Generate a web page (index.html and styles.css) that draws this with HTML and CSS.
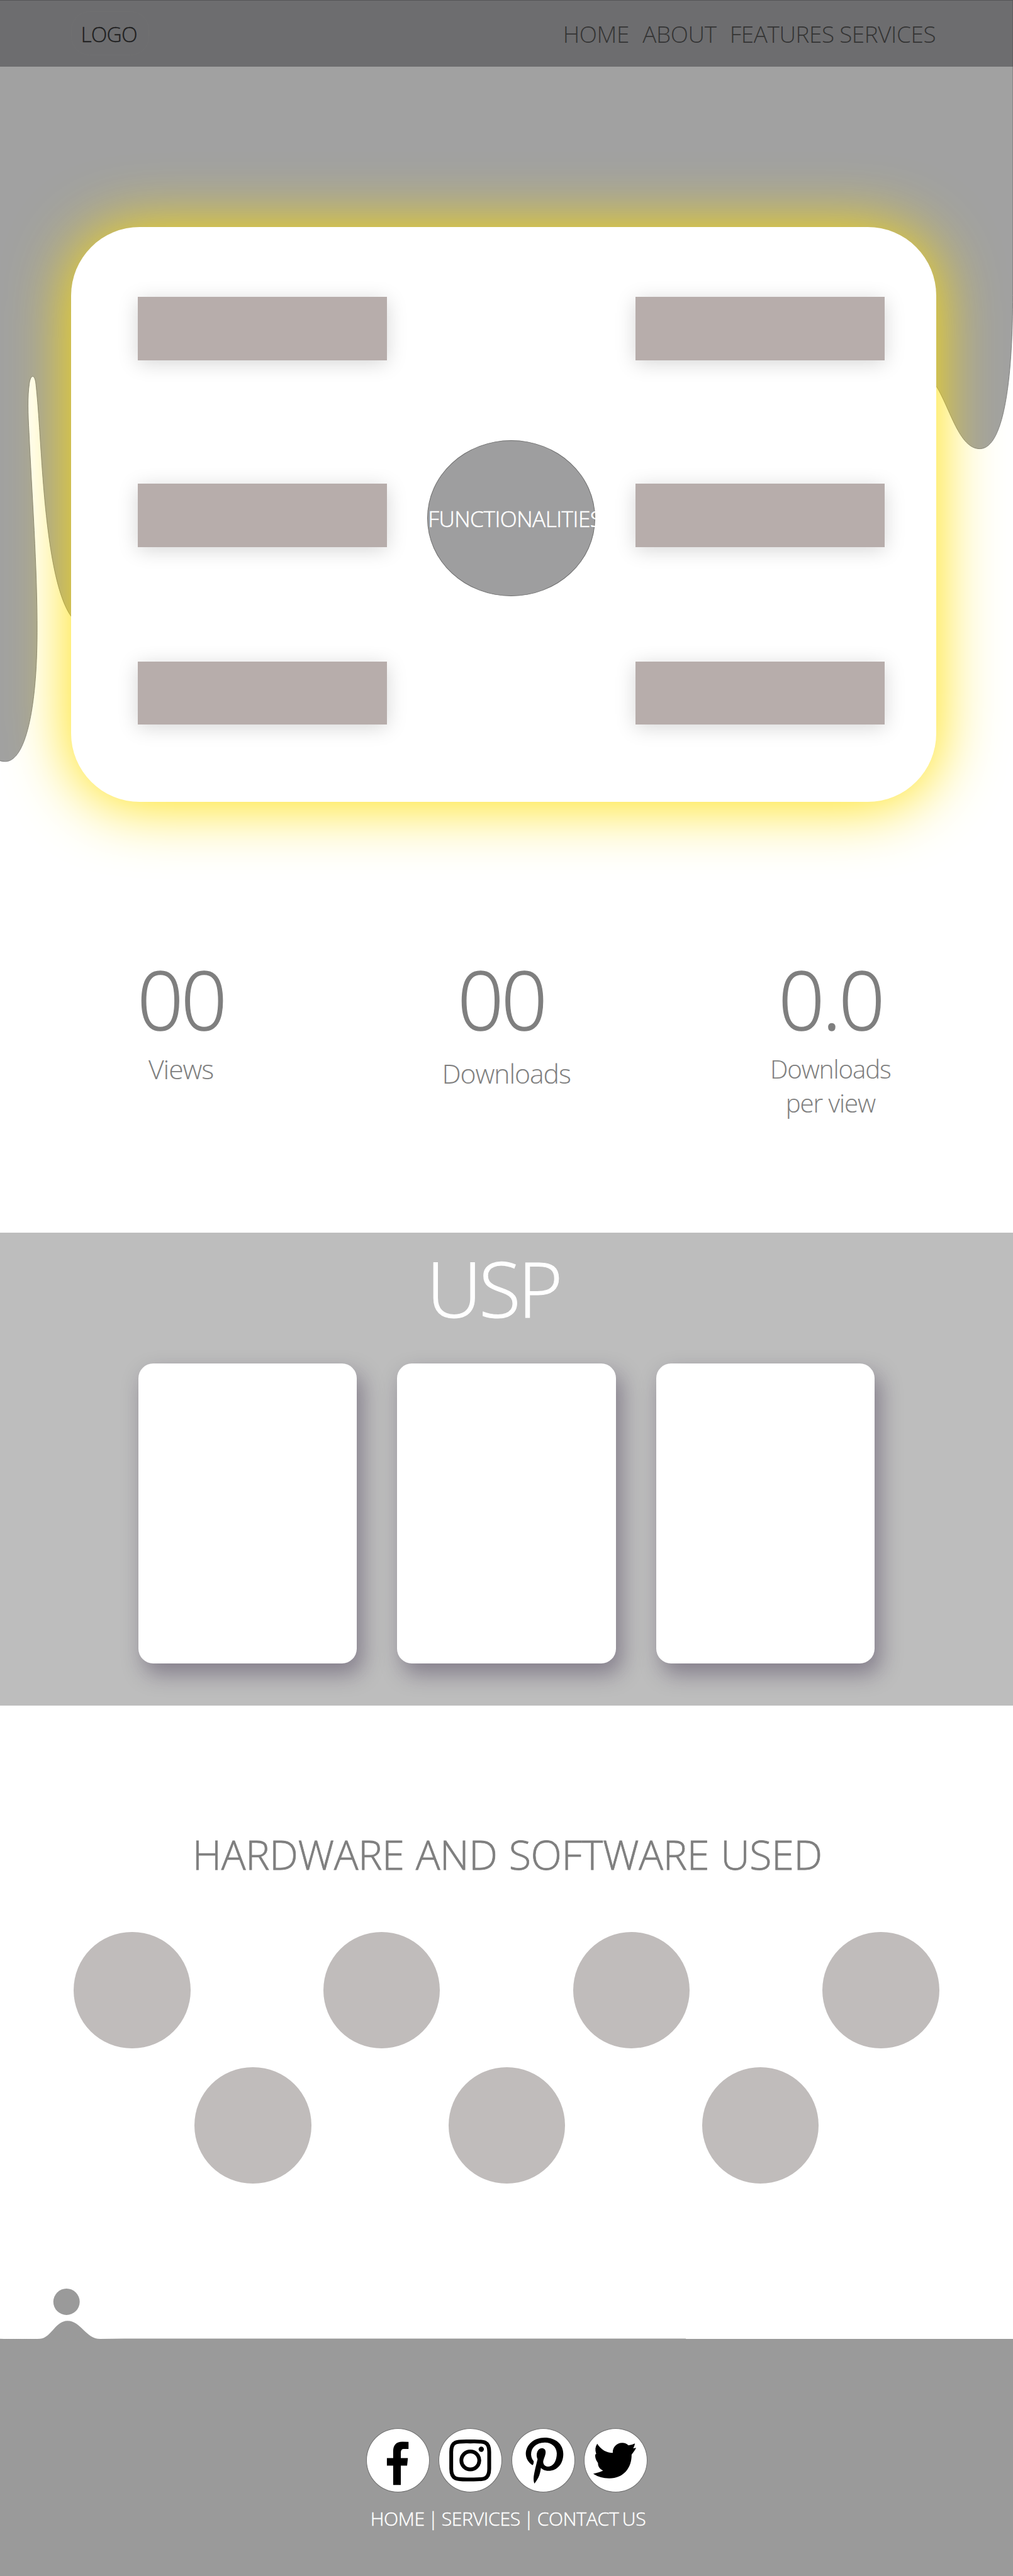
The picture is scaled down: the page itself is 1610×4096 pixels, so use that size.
FILE: index.html
```html
<!DOCTYPE html>
<html lang="en">
<head>
<meta charset="utf-8">
<title>Landing page</title>
<link rel="stylesheet" href="styles.css">
</head>
<body>
<svg class="drip" viewBox="0 0 1920 1450" aria-hidden="true">
  <path d="M-2 -2H1919.5V560C1919.5 700 1906 851 1857 851C1818 851 1801 775 1775 733L1400 600L300 1200L135 1169C100 1120 86 985 78 860C74 800 72 765 68 728C66 709 58 709 55.500 728C52 752 53 785 55 820C60 930 71 1080 70.400 1199C70 1345 48 1444 10 1444Q4 1444 -2 1442Z"/>
</svg>
<header class="header">
  <a class="logo">LOGO</a>
  <nav class="nav"><a>HOME</a><a>ABOUT</a><a>FEATURES</a><a>SERVICES</a></nav>
</header>
<main>
  <section class="card">
    <div class="col"><div class="box"></div><div class="box"></div><div class="box"></div></div>
    <div class="hub"><span>FUNCTIONALITIES</span></div>
    <div class="col"><div class="box"></div><div class="box"></div><div class="box"></div></div>
  </section>
  <section class="stats">
    <div class="stat"><div class="num">00</div><div class="label views">Views</div></div>
    <div class="stat"><div class="num">00</div><div class="label downloads">Downloads</div></div>
    <div class="stat"><div class="num">0.0</div><div class="label ratio">Downloads<br>per view</div></div>
  </section>
  <section class="usp">
    <h2>USP</h2>
    <div class="panels"><div class="panel"></div><div class="panel"></div><div class="panel"></div></div>
  </section>
  <section class="tech">
    <h2>HARDWARE AND SOFTWARE USED</h2>
    <div class="dots"><i></i><i></i><i></i><i></i></div>
    <div class="dots dots-short"><i></i><i></i><i></i></div>
  </section>
</main>
<footer class="footer">
  <svg class="splash" viewBox="0 0 1400 100" aria-hidden="true">
    <circle cx="126" cy="25" r="25"/>
    <path d="M0 95.200Q45 97.500 76 95.200C97 93 105 61 128 61C153 61 163 95.500 190 95.500L235 94.900L1300 94.800V100H0Z"/>
  </svg>
  <div class="social">
    <a><svg viewBox="0 0 120 121"><path d="M80 26V39.300H71Q65.400 39.300 65.400 46V56.700H78.800L77.300 71H65.400V107.700H50.900V71H39V56.700H50.900V43Q51.500 25 69.300 25.700Z"/></svg></a>
    <a><svg viewBox="0 0 120 121"><g class="line"><path d="M60 25.200C84 25.200 95.800 23 95.800 45V77C95.800 99 84 97.200 60 97.200S23.800 99 23.800 77V45C23.800 23 36 25.200 60 25.200Z"/><circle cx="60" cy="61.200" r="17"/></g><circle cx="80.700" cy="40" r="5"/></svg></a>
    <a><svg viewBox="24 16 361 362"><path d="M143 226C118 210 105 185 105 160C107 110 150 69 212 69C275 69 318 107 318 162C318 216 285 258 233 258C212 258 198 250 191 241C186 272 183 295 154 330C146 310 150 285 155 262C160 238 167 212 172 192C160 165 170 130 197 129C215 130 220 145 217 160C214 180 200 200 205 215C210 232 226 236 240 233C268 226 281 194 281 158C279 120 250 96 212 97C165 98 135 125 135 165C136 180 140 192 150 203Q150 220 143 226Z"/></svg></a>
    <a><svg viewBox="434 16 361 362"><path d="M510 104C530 136 562 156 598 156C596 125 620 99 652 99Q673 99 687 113Q706 111 724 102Q722 116 714 130L731 127Q722 144 705 166C706 240 660 301 578 301Q525 300 487 275Q518 269 543 257C522 246 514 232 514 213L511 209Q497 190 498 166L504 162Q492 128 510 104Z"/></svg></a>
  </div>
  <p class="links">HOME | SERVICES | CONTACT US</p>
</footer>
</body>
</html>
```
FILE: styles.css
```css
/* 1rem is ten design units; the design is 192rem wide */
html { font-size: 8.385417px; background: #fff; }
* { box-sizing: border-box; }
body {
  margin: 0;
  position: relative;
  width: 192rem;
  height: 4096px;
  display: flex;
  flex-direction: column;
  overflow: hidden;
  font-family: "Open Sans", "Noto Sans", sans-serif;
  font-weight: 300;
  color: #7f7f7f;
}
h2, p { margin: 0; font-weight: 300; }

.drip { position: absolute; z-index: -1; top: 0; left: 0; width: 192rem; height: 145rem; }
.drip path { fill: #a1a1a1; stroke: #707070; stroke-width: 1; }

.header {
  flex: none;
  height: 12.6rem;
  padding: 2.1rem 14.6rem 0 13.5rem;
  display: flex;
  justify-content: space-between;
  background: #6d6d6f;
  box-shadow: inset 0 1px #555557, inset -1px 0 #5c5c5e;
}
.logo {
  width: 14.8rem;
  height: 8.4rem;
  border: 1px solid #707071;
  border-radius: 3.5rem;
  padding-left: 1.7rem;
  font-size: 4rem;
  line-height: 8.4rem;
  letter-spacing: -.1rem;
  color: #1f1f1f;
  -webkit-text-stroke: .01em;
}
.nav {
  display: grid;
  grid-template-columns: 15.1rem 16.5rem 20.8rem 18.3rem;
  font-size: 4.4rem;
  line-height: 8.6rem;
  letter-spacing: -.05rem;
  color: #343434;
  white-space: nowrap;
}

.card {
  width: 164rem;
  height: 109rem;
  margin: 30.5rem 0 0 13.5rem;
  padding: 13.2rem 9.8rem 0 12.6rem;
  display: grid;
  grid-template-columns: 47.3rem 31.8rem 47.3rem;
  column-gap: 7.6rem;
  background: #fff;
  border-radius: 13rem;
  box-shadow: 0 .3rem 12rem #ffdf00;
}
.col { display: grid; grid-template-rows: 35.4rem 33.7rem 12rem; align-content: start; }
.box { height: 12rem; background: #b7adab; box-shadow: 0 .6rem 3.6rem rgba(0,0,0,.17); }
.hub {
  width: 31.8rem;
  height: 29.5rem;
  margin-top: 27.2rem;
  border: 1px solid #707070;
  border-radius: 50%;
  background: #9e9e9f;
  color: #fff;
  font-size: 4.2rem;
  line-height: 29.4rem;
  letter-spacing: -.06rem;
  white-space: nowrap;
  -webkit-text-stroke: .015em;
}

.stats {
  height: 81.6rem;
  padding: 27.4rem 0 0 14.3rem;
  display: grid;
  grid-template-columns: 60.7rem 62.4rem 40rem;
  -webkit-text-stroke: .012em;
}
.stat { width: 40rem; text-align: center; }
.num { font-size: 15.4rem; line-height: 20rem; letter-spacing: -.5rem; -webkit-text-stroke: .01em; }
.label { font-size: 5.1rem; line-height: 6.4rem; letter-spacing: -.13rem; }
.downloads { padding: .9rem 0 0 1.9rem; }
.ratio { font-size: 4.8rem; }

.usp { height: 89.7rem; padding-top: .6rem; background: #bdbdbd; }
.usp h2 { width: 187rem; text-align: center; font-size: 14.5rem; line-height: 20rem; letter-spacing: -.5rem; color: #fff; -webkit-text-stroke: .01em; }
.panels { display: flex; gap: 7.7rem; padding: 4.2rem 0 0 26.2rem; }
.panel {
  width: 41.4rem;
  height: 56.9rem;
  background: #fff;
  border-radius: 2.8rem;
  box-shadow: 1rem 2rem 4rem rgba(32,16,52,.36);
}

.tech { height: 120.1rem; padding-top: 23.3rem; }
.tech h2 {
  width: 192.3rem;
  text-align: center;
  font-size: 7.7rem;
  line-height: 10rem;
  letter-spacing: -.04rem;
  word-spacing: .2rem;
  -webkit-text-stroke: .012em;
}
.dots { display: flex; gap: 25.2rem; padding: 9.6rem 0 0 14rem; }
.dots-short { gap: 26rem; padding: 3.6rem 0 0 36.9rem; }
.dots i { width: 22.1rem; height: 22.1rem; border-radius: 50%; background: #c0bcbb; }

.footer { position: relative; flex: 1; padding-top: 17rem; background: #9a9a9a; text-align: center; }
.splash { position: absolute; left: 0; top: -9.5rem; width: 140rem; height: 10rem; fill: #9a9a9a; }
.social { display: flex; gap: 1.7rem; padding-left: 69.4rem; }
.social a {
  width: 12.05rem;
  height: 12.1rem;
  border: 1px solid #707070;
  border-radius: 50%;
  background: #fff;
}
.social svg { display: block; width: calc(100% + 2px); height: calc(100% + 2px); margin: -1px; }
.line { fill: none; stroke: #000; stroke-width: 7.2; }
.links {
  width: 192.6rem;
  padding-top: 2.6rem;
  font-size: 3.6rem;
  line-height: 4.8rem;
  letter-spacing: -.04rem;
  word-spacing: -.25rem;
  color: #fff;
  -webkit-text-stroke: .015em;
}
```
